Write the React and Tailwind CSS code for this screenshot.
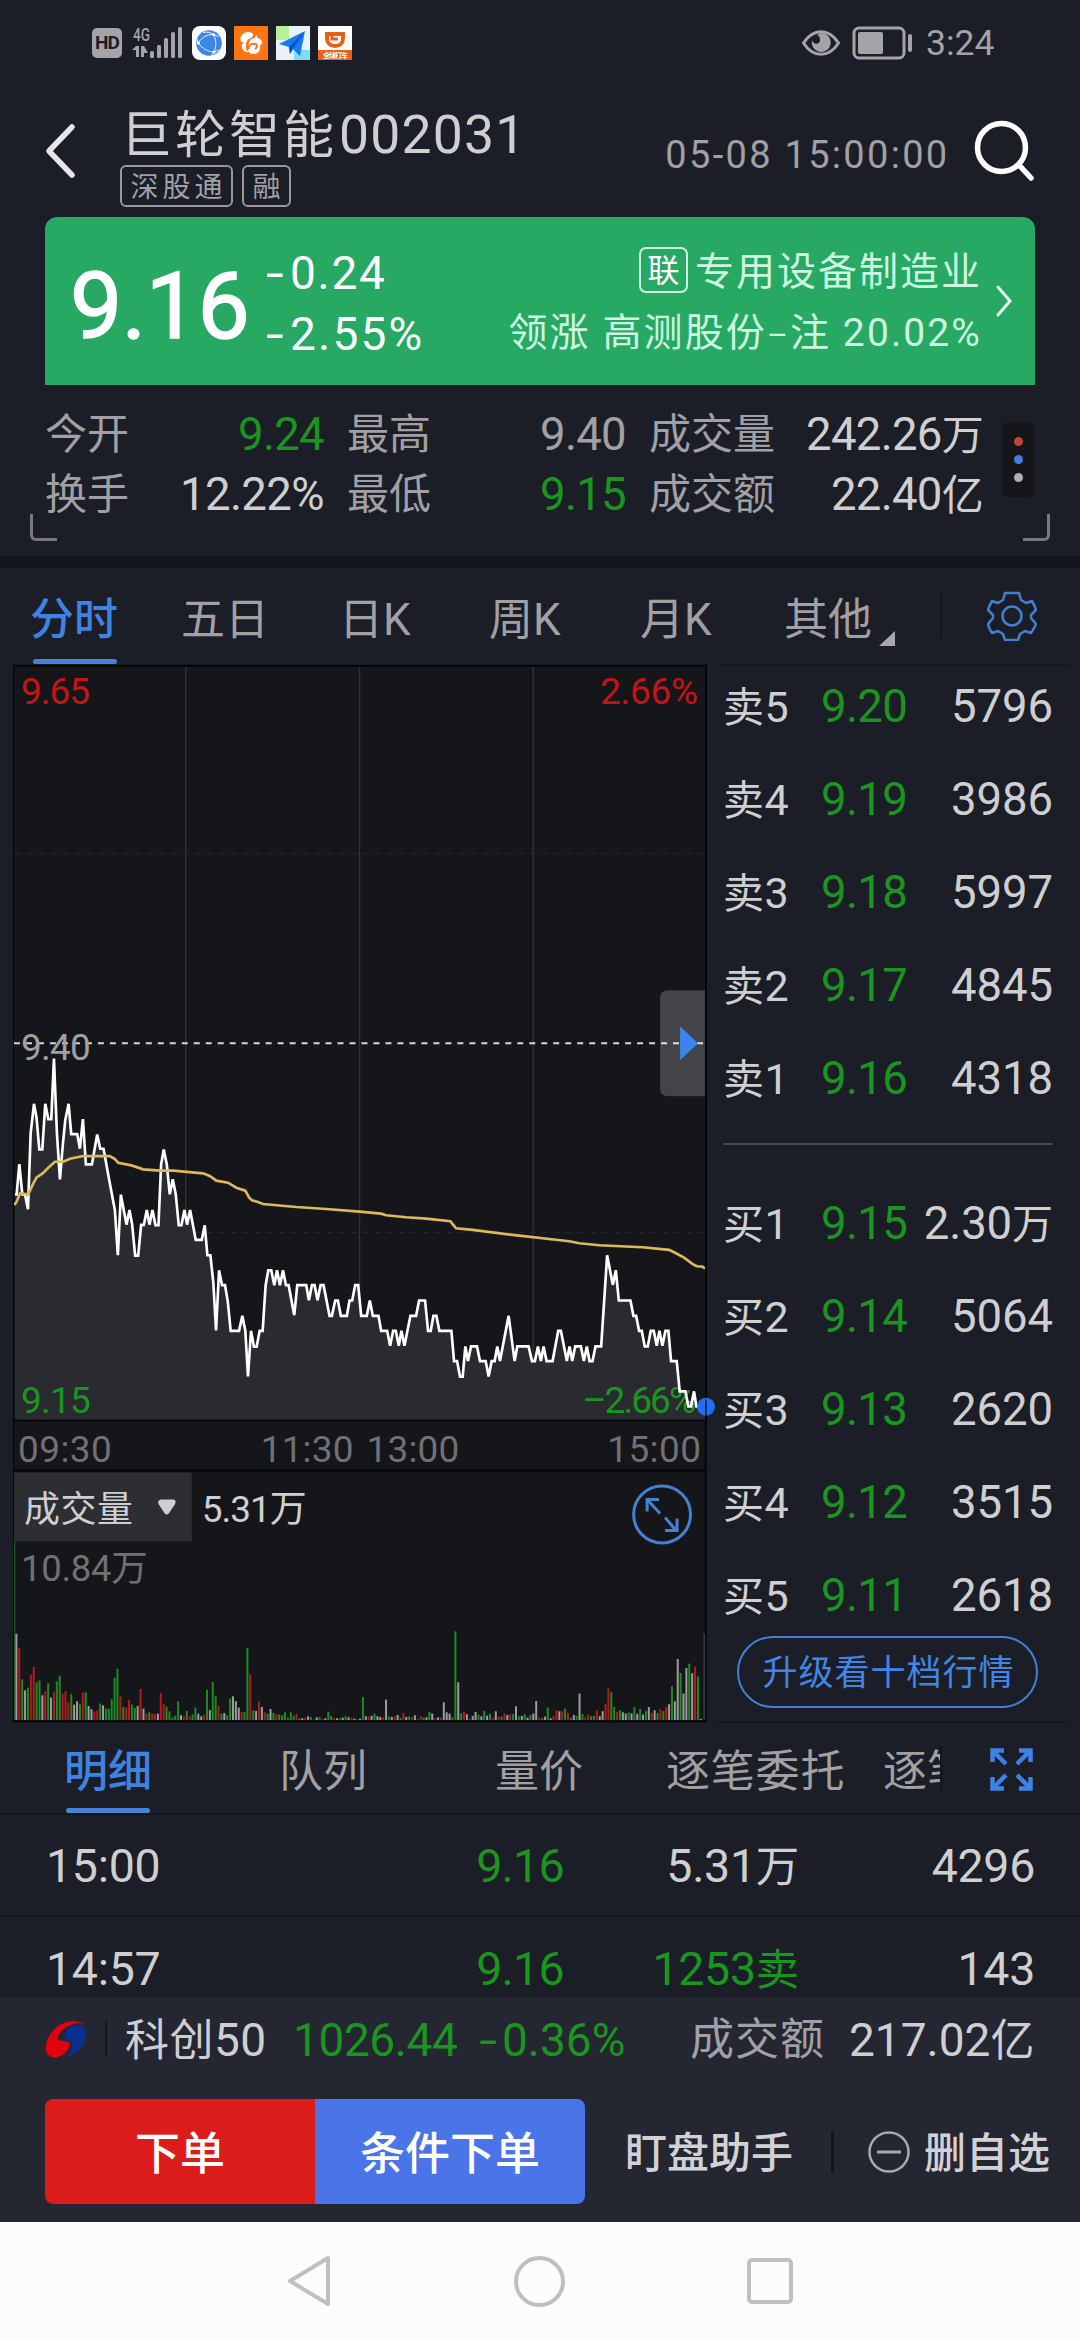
const PRICE = "45,583 50,583 58,492 67,583 75,583 84,628 92,400 102,311 110,355 118,448 127,448 136,311 145,357 154,357 162,175 171,400 180,538 189,430 196,360 206,311 214,402 232,402 240,446 249,357 258,493 276,493 292,403 301,446 311,446 328,540 345,630 354,766 363,584 380,674 389,630 397,674 406,767 415,767 424,675 432,675 441,630 449,674 458,630 467,676 476,676 484,493 492,448 501,493 510,583 519,538 528,583 537,676 545,676 554,630 562,674 571,630 588,720 606,720 615,676 623,766 632,766 641,850 649,992 658,811 667,856 676,856 684,903 693,993 718,993 728,948 737,993 745,1130 754,993 763,1041 771,1041 780,993 789,993 798,856 806,811 815,811 824,856 832,811 841,856 850,811 859,856 867,856 884,946 893,856 920,856 928,901 937,856 945,856 954,901 963,856 972,856 990,948 997,948 1007,902 1015,902 1024,948 1042,948 1050,902 1058,902 1067,856 1076,856 1085,948 1102,948 1111,902 1120,948 1137,948 1145,993 1163,993 1172,1038 1181,993 1189,993 1198,1038 1206,993 1215,1038 1233,948 1250,948 1259,902 1277,902 1286,993 1294,993 1302,948 1311,948 1320,993 1356,993 1364,1084 1373,1084 1382,1131 1390,1131 1398,1040 1406,1084 1415,1040 1433,1040 1442,1084 1459,1084 1468,1130 1477,1084 1486,1084 1494,1040 1502,1084 1528,948 1546,1084 1554,1040 1588,1040 1598,1084 1607,1084 1616,1040 1625,1084 1633,1040 1642,1084 1660,1084 1677,993 1685,993 1703,1084 1711,1040 1719,1084 1728,1040 1745,1040 1754,1084 1763,1040 1771,1084 1780,1084 1789,1040 1806,1040 1824,766 1841,855 1850,811 1859,902 1894,902 1903,948 1911,948 1920,993 1928,993 1937,1040 1946,1040 1955,993 1964,993 1973,1038 1981,993 1990,1038 1999,993 2008,993 2016,1084 2033,1084 2042,1175 2059,1175 2068,1220 2076,1220 2085,1175 2092,1220 2118,1220";

const AVERAGE = "43,615 50,605 60,580 85,583 100,550 110,532 128,520 145,503 165,485 190,485 210,476 250,468 330,468 345,477 355,488 395,496 430,508 480,512 520,512 610,520 630,528 650,542 685,548 710,563 737,572 748,592 757,601 775,606 790,612 890,621 980,627 1080,635 1145,641 1160,646 1220,652 1280,656 1353,664 1370,685 1420,690 1540,705 1710,724 1740,730 1800,736 1930,742 2010,750 2025,757 2055,773 2080,792 2093,799 2110,800 2118,806";

// one entry per minute: colour letter + height
const VOLUME = "w260 r218 g123 w90 g98 r137 r160 g114 g120 w75 r87 g111 w68 r86 g117 g134 r80 r87 r54 g78 w47 w57 g50 r83 g84 w43 w33 r26 r30 g50 w45 g35 g35 g63 g127 g155 r72 g40 r38 r62 g47 g37 w43 r94 w35 r20 g24 r20 r18 w20 r82 r50 g41 g27 g8 g14 g57 w15 r12 g28 r12 g18 g38 w20 w12 r17 g92 w30 g115 g72 r43 g20 w22 g15 g66 w72 w57 w38 r24 g25 g218 r138 g30 w28 r57 w40 r24 g20 w34 g22 r18 g17 g15 g24 g8 g24 g13 r19 w3 w6 r8 w12 g10 r3 w9 g9 r4 w6 g26 g13 r7 w6 g6 w8 g12 w9 r8 w5 r4 w5 g70 w12 r11 w13 g20 w12 w10 r9 w62 g12 w10 r12 w16 g8 r22 w10 g12 r9 w15 r4 r12 g8 w9 g25 w20 r6 w9 r8 w54 w24 w20 g9 g267 w114 g21 r26 w18 r5 w13 w25 g17 w12 g28 w14 g20 r8 w27 r12 g11 r21 w16 r18 g19 w42 g12 w13 g18 w8 g16 w20 w58 r8 g6 w11 g38 w6 r12 r30 w27 r27 g35 r22 g7 w16 g13 w80 g19 r9 r17 g12 g13 r29 w12 w27 r50 r97 g84 g40 r26 g30 w24 w20 g23 w21 g40 w19 g34 w17 g28 w40 r22 w30 g22 r33 g28 r40 w48 g102 w57 w184 g142 w80 w157 g170 w141 r161 g131 w4".split(" ");

const BAR_COLORS = { w: "#9c9ca0", r: "#b41a1a", g: "#1f8a24" };

const sells = [
    ["卖5", "9.20", "5796"],
    ["卖4", "9.19", "3986"],
    ["卖3", "9.18", "5997"],
    ["卖2", "9.17", "4845"],
    ["卖1", "9.16", "4318"],
];

const buys = [
    ["买1", "9.15", "2.30万"],
    ["买2", "9.14", "5064"],
    ["买3", "9.13", "2620"],
    ["买4", "9.12", "3515"],
    ["买5", "9.11", "2618"],
];

function StatusBar() {
    return (
        <div className="flex h-[86px] items-center justify-between pl-[92px] pr-[86px] text-[#a3a3a8]">
            <div className="flex items-center gap-2">
                <div className="flex h-[30px] w-[30px] items-center justify-center rounded-[5px] bg-[#a3a3a8] text-[19px] font-bold leading-[30px] tracking-[-1px] text-[#1b1e26]">
                    HD
                </div>
                <svg className="ml-[2px] h-[34px] w-[52px] overflow-visible" viewBox="0 0 52 34" fill="currentColor">
                    <text x="1" y="15" fontSize="19" fontWeight="500" textLength="17" lengthAdjust="spacingAndGlyphs">4G</text>
                    <path d="M4 20h3v11H4v-7H0zM9 20h3l4 7h-4v4H9z" />
                    <rect x="18" y="25" width="4" height="7" rx="1.5" />
                    <rect x="25" y="19" width="4" height="13" rx="1.5" />
                    <rect x="32" y="12" width="4" height="20" rx="1.5" />
                    <rect x="39" y="6" width="4" height="26" rx="1.5" />
                    <rect x="46" y="1" width="4" height="31" rx="1.5" />
                </svg>
                <svg className="h-[34px] w-[34px]" viewBox="0 0 34 34">
                    <rect width="34" height="34" rx="8" fill="#fff" />
                    <circle cx="17" cy="17" r="12.800" fill="#3d86e8" />
                    <g fill="none" stroke="#e8f2ff" strokeWidth="1">
                        <path d="M6 17C10 11 16 8 21.500 8.500M21.500 8.500c3 6 3 12 .5 17.500M6 17c4 5 10 9 16 9M11 6.500c4-1 8 0 10.500 2M21.500 8.500l5 2M6 17l-1-4M22 26l5-2M22 26l-3 4" />
                    </g>
                    <g fill="#fff">
                        <circle cx="6.500" cy="17" r="1.600" />
                        <circle cx="21.500" cy="8.500" r="1.600" />
                        <circle cx="22" cy="26" r="1.600" />
                    </g>
                </svg>
                <svg className="h-[34px] w-[34px]" viewBox="0 0 34 34">
                    <rect width="34" height="34" fill="#ff7414" />
                    <path d="M11 17C6 17 5 12 8 9c2-3 6-4 10-2 2 1 1 4-1 5-3 1-5 3-5 7-1 3 1 6 3 7-5 1-8-4-7-8z" fill="#fff" />
                    <path d="M15 17c1-4 4-5 6-5l1-3 2 3c3 1 5 4 4 6l-2 1c1 4-1 9-6 9-4 0-6-2-6-5z" fill="#fff" />
                    <path d="M14 23c1-4 4-6 7-5 3 0 2 4 0 5" fill="none" stroke="#ff6a0e" strokeWidth="1.800" />
                </svg>
                <svg className="h-[34px] w-[34px]" viewBox="0 0 34 34">
                    <rect width="34" height="34" fill="#e8f1f4" />
                    <path d="M0 0h13v14H0z" fill="#b9ef9c" />
                    <path d="M18 24h16v10H18z" fill="#7fdcf2" />
                    <path d="M29 5 3 18l10 3 1 7 3-5 7 7z" fill="#157bf3" />
                    <path d="M29 5 13 21l1 7 3-5z" fill="#0a55c8" />
                </svg>
                <svg className="h-[34px] w-[34px]" viewBox="0 0 34 34">
                    <rect width="34" height="34" fill="#fff" />
                    <rect y="24" width="34" height="10" fill="#e8641e" />
                    <path d="M9 8h16v4c0 5-3 8-8 8s-8-3-8-8z" fill="none" stroke="#e2611d" strokeWidth="4" />
                    <path d="M14 10v3h6" fill="none" stroke="#e2611d" strokeWidth="3" />
                    <text x="5" y="32" fontSize="7" fontWeight="700" fill="#fff" textLength="25">全球打车</text>
                </svg>
            </div>
            <div className="flex items-center">
                <svg className="h-[28px] w-[40px]" viewBox="0 0 40 28">
                    <path d="M2.500 14C12-1 28-1 37.500 14 28 29 12 29 2.500 14z" fill="none" stroke="currentColor" strokeWidth="3" />
                    <path d="M20 4a9.500 9.500 0 1 1-9 7c1 5 8 5 8 0 0-3-1-4-3-5z" fill="currentColor" />
                </svg>
                <svg className="ml-[11px] h-[34px] w-[61px]" viewBox="0 0 61 34">
                    <rect x="2" y="2" width="50" height="30" rx="5" fill="none" stroke="currentColor" strokeWidth="3" />
                    <rect x="6" y="6" width="25" height="22" rx="2" fill="currentColor" />
                    <rect x="56" y="8" width="4" height="18" rx="2" fill="currentColor" />
                </svg>
                <div className="ml-[13px] w-[68px] whitespace-nowrap pt-[2px] text-[35.500px] leading-none">3:24</div>
            </div>
        </div>
    );
}

function Header() {
    return (
        <div className="flex h-[131px] pl-[45px] pr-[44px]">
            <svg className="mt-[37px] h-[56px] w-[32px]" viewBox="0 0 32 56" fill="none" stroke="#e6e6e8" strokeWidth="5.500" strokeLinecap="round" strokeLinejoin="round">
                <path d="M27 4 4 28l23 24" />
            </svg>
            <div className="ml-[43px] w-[546px]">
                <div className="flex h-[79px] items-center whitespace-nowrap pt-[19px] leading-none text-[#cfcfd2]">
                    <span className="w-[219px] pl-[1px] text-[51px] tracking-[3px]">巨轮智能</span>
                    <span className="text-[53.500px] tracking-[1.200px]">002031</span>
                </div>
                <div className="flex gap-[9px] text-[28px] leading-none text-[#a0a0a5]">
                    <span className="flex h-[42px] w-[113px] items-center justify-center rounded-[6px] border-2 border-[#97979c] pl-1 pt-[3px] tracking-[4px]">深股通</span>
                    <span className="flex h-[42px] w-[49px] items-center justify-center rounded-[6px] border-2 border-[#97979c] pt-[3px]">融</span>
                </div>
            </div>
            <div className="mt-[50px] w-[309px] whitespace-nowrap text-[38px] leading-none tracking-[2.300px] text-[#a0a0a5]">
                05-08 15:00:00
            </div>
            <svg className="mt-[34px] h-[62px] w-[62px] shrink-0" viewBox="0 0 62 62" fill="none" stroke="#fff" strokeWidth="5.500" strokeLinecap="round">
                <circle cx="27.500" cy="27.500" r="24" />
                <path d="m45 45 12 13" />
            </svg>
        </div>
    );
}

function QuoteCard() {
    return (
        <div className="mx-[45px] flex h-[168px] rounded-t-[12px] bg-[#27a863] text-white">
            <div className="w-[225px] pl-[25px] pt-[43px] text-[93px] leading-none tracking-[-0.500px] [-webkit-text-stroke:1.500px_white]">9.16</div>
            <div className="w-[188px] pt-[33px] text-[46px] leading-none tracking-[1.700px]">
                <div className="flex h-[61px]">
                    <span className="w-[20px] scale-x-140">-</span>0.24
                </div>
                <div className="flex tracking-[2.200px]">
                    <span className="w-[20px] scale-x-140">-</span>2.55%
                </div>
            </div>
            <div className="flex w-[524px] flex-col items-end whitespace-nowrap pt-[31px] text-[39px] leading-none text-[#cdf7e0]">
                <div className="flex h-[44px] items-center">
                    <span className="flex h-[46px] w-[49px] items-center justify-center rounded-[7px] border-2 border-[#cdf7e0] pt-[2px] text-[32px] text-white">联</span>
                    <span className="ml-[7px] pt-[4px] tracking-[2px]">专用设备制造业</span>
                </div>
                <div className="mt-[22px] tracking-[2.100px]">领涨 高测股份<span className="text-[32px]">–</span>注 20.02%</div>
            </div>
            <svg className="ml-[14px] mt-[68px] h-[32px] w-[17px]" viewBox="0 0 17 32" fill="none" stroke="#e4fbef" strokeWidth="3" strokeLinecap="round">
                <path d="m2 2 12 14L2 30" />
            </svg>
        </div>
    );
}

function Stat({ label, value, labelClass, valueClass }) {
    return (
        <>
            <span className={`pt-[2px] text-[42px] text-[#a0a0a5] ${labelClass}`}>{label}</span>
            <span className={`pt-[2px] text-right text-[45.500px] ${valueClass}`}>{value}</span>
        </>
    );
}

function Stats() {
    return (
        <div className="flex h-[171px] justify-between pl-[30px] pr-[30px]">
            <div className="relative flex w-[953px] flex-col pl-[15px] pt-[19px] leading-none text-[#cfcfd2]">
                <div className="flex h-[60px] items-center whitespace-nowrap">
                    <Stat label="今开" value="9.24" labelClass="w-[120px]" valueClass="w-[159px] tracking-[-0.700px] text-[#1a951f]" />
                    <Stat label="最高" value="9.40" labelClass="ml-[23px] w-[120px]" valueClass="w-[159px] tracking-[-0.700px] text-[#a0a0a5]" />
                    <Stat label="成交量" value={<>242.26<span className="text-[42px]">万</span></>} labelClass="ml-[23px] w-[140px]" valueClass="w-[194px] tracking-[-0.700px]" />
                </div>
                <div className="flex h-[60px] items-center whitespace-nowrap">
                    <Stat label="换手" value="12.22%" labelClass="w-[120px]" valueClass="w-[159px] tracking-[-0.600px]" />
                    <Stat label="最低" value="9.15" labelClass="ml-[23px] w-[120px]" valueClass="w-[159px] tracking-[-0.700px] text-[#1a951f]" />
                    <Stat label="成交额" value={<>22.40<span className="text-[42px]">亿</span></>} labelClass="ml-[23px] w-[140px]" valueClass="w-[194px] tracking-[-0.700px]" />
                </div>
                <span className="absolute bottom-[15px] left-0 h-[27px] w-[27px] rounded-bl-[6px] border-b-3 border-l-3 border-[#77777c]" />
            </div>
            <div className="flex w-[48px] flex-col justify-between pb-[15px] pt-[37px]">
                <div className="flex h-[75px] w-[33px] flex-col items-center justify-center gap-[9px] rounded-[6px] bg-[#15161a]">
                    <span className="h-[9px] w-[9px] rounded-full bg-[#c24636]" />
                    <span className="h-[9px] w-[9px] rounded-full bg-[#3f7fe0]" />
                    <span className="h-[9px] w-[9px] rounded-full bg-[#b0b0b4]" />
                </div>
                <span className="h-[27px] w-[27px] self-end rounded-br-[6px] border-b-3 border-r-3 border-[#77777c]" />
            </div>
        </div>
    );
}

function PeriodTabs() {
    return (
        <div className="flex h-[96px] whitespace-nowrap text-[44px] leading-none text-[#a0a0a5]">
            <div className="ml-[30px] flex w-[151px] flex-col justify-between">
                <span className="pt-[30px] font-medium text-[#3e82e2]">分时</span>
                <span className="ml-[3px] h-[5px] w-[84px] rounded-full bg-[#4582d8]" />
            </div>
            <span className="w-[158px] pt-[30px]">五日</span>
            <span className="w-[150px] pt-[30px]">日K</span>
            <span className="w-[151px] pt-[30px]">周K</span>
            <span className="w-[144px] pt-[30px]">月K</span>
            <span className="w-[95px] pt-[30px]">其他</span>
            <svg className="mt-[63px] h-[15px] w-[16px]" viewBox="0 0 16 15">
                <path d="M16 0v15H0z" fill="#a8a8ac" />
            </svg>
            <span className="ml-[45px] mt-[25px] h-[45px] w-[2px] bg-[#15161a]" />
            <svg className="ml-[45px] mt-[23px] h-[50px] w-[50px]" viewBox="0 0 50 50" fill="none" stroke="#467fd2" strokeWidth="2.500" strokeLinejoin="round">
                <path d="M18 2h14l2 7 5 3 6-2q3 5 4 9l-5 5v3l5 6q-2 5-5 9l-6-2-5 3-2 6H18l-2-6-5-3-6 2q-3-4-4-9l5-6v-3l-5-5q1-4 4-9l6 2 5-3z" />
                <circle cx="25" cy="25" r="9.500" />
            </svg>
        </div>
    );
}

function Chart() {
    return (
        <svg className="block h-[1059px] w-[707px]" viewBox="0 0 707 1059">
            <rect x="0" y="0" width="695" height="1059" fill="#15161a" />
            <g fill="none" stroke="#2f3038" strokeWidth="1.500">
                <path d="M173 1v756M347 1v756M521 1v756" />
                <path d="M2 189h692M2 568.500h692" stroke="#24252a" strokeDasharray="6 6" />
            </g>

            {/* 分时线 */}
            <g transform="translate(-13 336) scale(0.33333)">
                <polygon points={`45,1260 ${PRICE} 2118,1260`} fill="#2a2b30" />
            </g>
            <path d="M1 379h692" stroke="#d6d6d8" strokeWidth="2" strokeDasharray="6 6" />
            <g fontSize="37">
                <text x="8" y="39" fill="#c41414" textLength="69">9.65</text>
                <text x="588" y="39" fill="#c41414" textLength="98">2.66%</text>
                <text x="8" y="395.500" fill="#a0a0a4" textLength="70">9.40</text>
                <text x="8" y="749" fill="#1a951f" textLength="70">9.15</text>
                <text x="570" y="749" fill="#1a951f" textLength="114">–2.66%</text>
            </g>
            <g transform="translate(-13 336) scale(0.33333)" fill="none">
                <polyline points={PRICE} stroke="#fff" strokeWidth="8" />
                <polyline points={AVERAGE} stroke="#ddb95c" strokeWidth="8" />
            </g>
            <path d="M694 326h-38q-8 0-8 8v90q0 8 8 8h38z" fill="#fff" fillOpacity="0.2" />
            <path d="m668 362 18 17-18 17z" fill="#3b83f0" />

            <g fontSize="37" fill="#707075">
                <text x="5" y="798" textLength="94">09:30</text>
                <text x="248" y="798" textLength="93">11:30</text>
                <text x="354" y="798" textLength="93">13:00</text>
                <text x="595" y="798" textLength="94">15:00</text>
            </g>

            {/* 成交量 */}
            <path d="M1.500 878v179" stroke="#1c5c22" strokeWidth="1.500" />
            {VOLUME.map((bar, i) => {
                const h = Number(bar.slice(1)) / 3;
                return <rect key={i} x={2.4 + i * 2.892} y={1057 - h} width="2" height={h} fill={BAR_COLORS[bar[0]]} />;
            })}
            <path d="M692.500 970v87" stroke="#707075" strokeWidth="1.500" />
            <rect x="1" y="809" width="178" height="69" fill="#2d2e32" />
            <g fontSize="36" fill="#cfcfd2">
                <text x="11" y="858" textLength="109">成交量</text>
                <text x="189" y="858" fontSize="37" textLength="105">5.31万</text>
            </g>
            <path d="M148 836h13q3 1 1 5l-6 9q-2 2-4 0l-6-9q-2-4 2-5z" fill="#cfcfd2" />
            <text x="8" y="918" fontSize="36.500" fill="#707075" textLength="127">10.84万</text>
            <g fill="none" stroke="#4480d4" strokeWidth="3">
                <circle cx="650" cy="851" r="28.500" />
                <path d="m636 837 12 13M635 848v-12h12M653 854l11 13M665 855v12h-12" />
            </g>
            <g fill="none" stroke="#05060a" strokeWidth="2">
                <rect x="0" y="1" width="694" height="756" />
                <path d="M0 757v301M693.500 757v301M0 807h694M0 1058h695" />
            </g>
            <circle cx="694" cy="743" r="9" fill="#1f6ff0" />
            <path d="M694 736v20" stroke="#05060a" strokeOpacity="0.6" strokeWidth="2" />
        </svg>
    );
}

function OrderRow({ row }) {
    const [name, price, qty] = row;
    return (
        <div className="flex h-[93px] items-center whitespace-nowrap leading-none text-[#cfcfd2]">
            <span className="w-[98px] pt-[2px] text-[43px] tracking-[0.500px]"><span className="text-[41px]">{name[0]}</span>{name[1]}</span>
            <span className="pt-px text-[45.500px] tracking-[-0.600px] text-[#1a951f]">{price}</span>
            <span className="ml-auto pt-px text-[45.500px] tracking-[-0.100px]">
                {qty.replace("万", "")}
                {qty.endsWith("万") && <span className="text-[41px]">万</span>}
            </span>
        </div>
    );
}

function OrderBook() {
    return (
        <div className="mr-[12px] h-[1059px] flex-1 border-y-2 border-[#16171c] pl-[4px] pr-[15px]">
            <div className="-mt-[6px]">
                {sells.map((row) => <OrderRow key={row[0]} row={row} />)}
            </div>
            <div className="mt-[18px] h-[2px] w-[330px] bg-[#484a52]" />
            <div className="mt-[32px]">
                {buys.map((row) => <OrderRow key={row[0]} row={row} />)}
            </div>
            <div className="-mt-[6px] ml-[14px] flex h-[72px] w-[301px] items-center justify-center rounded-full border-2 border-[#467fd2] pl-[2px] pt-[3px] text-[35px] leading-none tracking-[1px] text-[#4285e6]">
                升级看十档行情
            </div>
        </div>
    );
}

function DetailTabs() {
    return (
        <div className="flex h-[92px] whitespace-nowrap border-b-2 border-[#15161b] text-[44px] leading-none text-[#a0a0a5]">
            <div className="ml-[64px] flex w-[215px] flex-col justify-between">
                <span className="pt-[27px] font-medium text-[#3e82e2]">明细</span>
                <span className="ml-[2px] h-[5px] w-[84px] rounded-full bg-[#4582d8]" />
            </div>
            <span className="w-[216px] pt-[27px]">队列</span>
            <span className="w-[171px] pt-[27px]">量价</span>
            <span className="w-[217px] pt-[27px] tracking-[0.800px]">逐笔委托</span>
            <span className="w-[57px] overflow-hidden pt-[27px]">逐笔</span>
            <span className="mt-[23px] h-[45px] w-[2px] shrink-0 bg-[#15161a]" />
            <svg className="ml-[48px] mt-[25px] h-[43px] w-[43px]" viewBox="0 0 43 43" fill="none" stroke="#3e82e8" strokeWidth="4.500">
                <path d="M14 2.500H2.500V14M3 3l13 13M29 2.500h11.500V14M40 3 27 16M14 40.500H2.500V29M3 40l13-13M29 40.500h11.500V29M40 40 27 27" />
            </svg>
        </div>
    );
}

function BottomPanel() {
    return (
        <div className="relative h-[225px] bg-[#242632] leading-none">
            <div className="flex h-[84px] items-center whitespace-nowrap pl-[45px] text-[46px] text-[#1a951f]">
                <svg className="h-[38px] w-[42px]" viewBox="0 0 42 38">
                    <path d="M40 8c4 13-6 26-18 29 4-5 6-11 5-14-2-3-8-2-8-6C20 8 32 0 40 8z" fill="#0b2f8c" />
                    <path d="M39 5C33-2 16 0 7 12-1 22-2 34 7 37c8 2 17-5 18-13-1-5-12-1-12-6C14 9 30-1 39 5z" fill="#e3000f" />
                </svg>
                <span className="ml-[18px] h-[36px] w-[2px] bg-[#15161a]" />
                <span className="ml-[18px] w-[168px] pt-[2px] tracking-[0.500px] text-[#cfcfd2]"><span className="text-[44px]">科创</span>50</span>
                <span className="w-[190px] pt-[2px] tracking-[-0.400px]">1026.44</span>
                <span className="w-[19px] scale-x-140 pt-[2px]">-</span>
                <span className="w-[188px] pt-[2px]">0.36%</span>
                <span className="w-[159px] pt-[2px] text-[44px] tracking-[1px] text-[#a0a0a5]">成交额</span>
                <span className="pt-[2px] text-[#cfcfd2]">217.02<span className="text-[44px]">亿</span></span>
            </div>
            <div className="mt-[18px] flex h-[105px] items-center whitespace-nowrap pl-[45px] text-[#d2d2d5]">
                <div className="flex h-[105px] w-[540px] overflow-hidden rounded-[8px] text-[45px] font-medium text-white">
                    <div className="flex w-1/2 items-center justify-center bg-[#dc1b1b] pt-[5px]">下单</div>
                    <div className="flex w-1/2 items-center justify-center bg-[#4a75e8] pt-[5px]">条件下单</div>
                </div>
                <span className="ml-[40px] w-[206px] pt-[5px] text-[42px] font-medium">盯盘助手</span>
                <span className="h-[42px] w-[3px] bg-[#15161a]" />
                <svg className="ml-[34px] h-[42px] w-[42px]" viewBox="0 0 42 42" fill="none" stroke="#a9a9ae" strokeWidth="2.500">
                    <circle cx="21" cy="21" r="19.500" />
                    <path d="M9 21h24" strokeWidth="3" />
                </svg>
                <span className="ml-[14px] pt-[5px] text-[42px] font-medium">删自选</span>
            </div>
        </div>
    );
}

function NavBar() {
    return (
        <div className="flex h-[118px] items-center justify-between bg-[#fcfcfc] pl-[287px] pr-[287px]">
            <svg className="h-[52px] w-[44px]" viewBox="0 0 44 52" fill="none" stroke="#bfbfbf" strokeWidth="4" strokeLinejoin="round">
                <path d="M41 3v46L3 26z" />
            </svg>
            <span className="h-[51px] w-[51px] rounded-full border-4 border-[#bfbfbf]" />
            <span className="h-[46px] w-[46px] rounded-[5px] border-4 border-[#bfbfbf]" />
        </div>
    );
}

export default function App() {
    return (
        <div className="h-[2340px] w-[1080px] overflow-hidden bg-[#1b1e26] font-['Roboto','Noto_Sans_CJK_SC',sans-serif]">
            <StatusBar />
            <Header />
            <QuoteCard />
            <Stats />
            <div className="h-[12px] bg-[#15161a]" />
            <PeriodTabs />
            <div className="flex pl-[13px]">
                <Chart />
                <OrderBook />
            </div>
            <DetailTabs />
            <div className="h-[182px] overflow-hidden text-[46.500px] leading-none text-[#cfcfd2]">
                <div className="flex h-[102px] items-center whitespace-nowrap border-b-2 border-[#15161b] pl-[46px] pr-[45px] pt-[3px]">
                    <span className="w-[338px] tracking-[-0.300px]">15:00</span>
                    <span className="w-[180px] text-right tracking-[-0.700px] text-[#1a951f]">9.16</span>
                    <span className="w-[235px] text-right tracking-[-0.300px]">5.31<span className="text-[43.500px]">万</span></span>
                    <span className="flex-1 text-right tracking-[-0.300px]">4296</span>
                </div>
                <div className="flex h-[102px] items-center whitespace-nowrap pl-[46px] pr-[45px] pt-[2px]">
                    <span className="w-[338px] tracking-[-0.300px]">14:57</span>
                    <span className="w-[180px] text-right tracking-[-0.700px] text-[#1a951f]">9.16</span>
                    <span className="w-[235px] text-right tracking-[-0.300px] text-[#1a951f]">1253<span className="text-[43.500px]">卖</span></span>
                    <span className="flex-1 text-right tracking-[-0.300px]">143</span>
                </div>
            </div>
            <BottomPanel />
            <NavBar />
        </div>
    );
}
